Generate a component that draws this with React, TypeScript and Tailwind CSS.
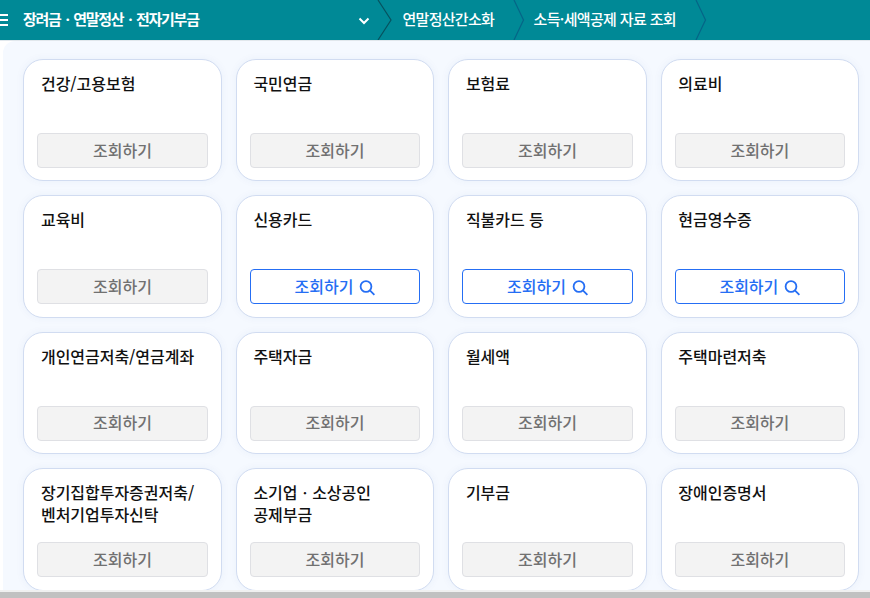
import React from "react";

const cards = [
  { lines: ["건강/고용보험"], active: false },
  { lines: ["국민연금"], active: false },
  { lines: ["보험료"], active: false },
  { lines: ["의료비"], active: false },
  { lines: ["교육비"], active: false },
  { lines: ["신용카드"], active: true },
  { lines: ["직불카드 등"], active: true },
  { lines: ["현금영수증"], active: true },
  { lines: ["개인연금저축/연금계좌"], active: false },
  { lines: ["주택자금"], active: false },
  { lines: ["월세액"], active: false },
  { lines: ["주택마련저축"], active: false },
  { lines: ["장기집합투자증권저축/", "벤처기업투자신탁"], active: false },
  { lines: ["소기업ㆍ소상공인", "공제부금"], active: false },
  { lines: ["기부금"], active: false },
  { lines: ["장애인증명서"], active: false },
];

const Divider = ({ wide = false }: { wide?: boolean }) => (
  <svg
    className={wide ? "w-[16px] h-[40px] shrink-0" : "w-[12px] h-[40px] shrink-0"}
    viewBox={wide ? "0 0 16 40" : "0 0 12 40"}
    fill="none"
  >
    <path
      d={wide ? "M1 0L14 20L1 40" : "M1 0L10.500 20L1 40"}
      stroke={wide ? "#06525f" : "#056587"}
      strokeWidth="1.2"
    />
  </svg>
);

const SearchIcon = () => (
  <svg className="w-[16px] h-[16px] ml-1.5 mt-[3px]" viewBox="0 0 16 16" fill="none" stroke="#256ef4" strokeWidth="1.8">
    <circle cx="7" cy="6.500" r="5.400" />
    <path d="M10.900 10.400L15.400 14.900" />
  </svg>
);

const TopBar = () => {
  return (
    <header className="flex items-center h-10 bg-[#008996] text-white shrink-0">
      <div className="flex flex-col gap-[3px] w-2">
        <span className="h-[2px] bg-white" />
        <span className="h-[2px] bg-white" />
        <span className="h-[2px] bg-white" />
      </div>
      <strong className="w-[335px] pl-[15px] pb-[2px] text-[15px] font-bold tracking-[-1.25px] whitespace-nowrap">
        장려금ㆍ연말정산ㆍ전자기부금
      </strong>
      <div className="w-[34px] pl-[15px]">
        <svg className="w-[12px] h-[8px] mt-0.5" viewBox="0 0 12 8" fill="none" stroke="#fff" strokeWidth="2">
          <path d="M1.500 1.500L6 6L10.500 1.500" />
        </svg>
      </div>
      <Divider wide />
      <span className="w-[120px] pl-[9.500px] pb-[2px] text-[15px] font-medium tracking-[-0.72px] whitespace-nowrap">
        연말정산간소화
      </span>
      <Divider />
      <span className="w-[170px] pl-[8.500px] pb-[2px] text-[15px] font-medium tracking-[-0.65px] whitespace-nowrap">
        소득·세액공제 자료 조회
      </span>
      <Divider />
    </header>
  );
};

const Card = ({ lines, active }: { lines: string[]; active: boolean }) => {
  return (
    <div className="flex flex-col justify-between h-[122.4px] rounded-[20px] border border-[#d1dcf1] bg-white px-[13px] pt-[12px] pb-[12.6px] shadow-[0_0_8px_rgba(40,80,160,0.05)]">
      <h2 className="pl-[3.700px] text-[16px] leading-[22px] font-medium tracking-[-0.03px] text-[#111] whitespace-nowrap">
        {lines.map((line) => (
          <span key={line} className="block">
            {line}
          </span>
        ))}
      </h2>
      <button
        className={
          active
            ? "flex items-center justify-center h-[35px] rounded-[4px] border border-[#256ef4] bg-white pb-px text-[16px] font-medium text-[#256ef4]"
            : "flex items-center justify-center h-[35px] rounded-[4px] border border-[#dfe0e4] bg-[#f3f3f3] pb-[1.500px] text-[16px] font-medium text-[#717171]"
        }
      >
        조회하기
        {active && <SearchIcon />}
      </button>
    </div>
  );
};

const App = () => {
  return (
    <div
      lang="ko"
      className="flex flex-col w-[870px] h-[598px] overflow-hidden bg-white font-['Noto_Sans_CJK_KR',sans-serif]"
    >
      <TopBar />
      <main className="flex-1 min-h-0 overflow-hidden border-t border-[#e1e7ec]">
        <div className="ml-[3px] h-full rounded-tl-[12px] bg-[#f5f9ff] pl-[20.300px] pt-[18px]">
          <div className="grid grid-cols-4 gap-[14px] w-[835.800px]">
            {cards.map((card) => (
              <Card key={card.lines[0]} lines={card.lines} active={card.active} />
            ))}
          </div>
        </div>
      </main>
      <footer className="h-2 shrink-0 border-t-2 border-[#f0f0f0] bg-[#c1c1c1]" />
    </div>
  );
};

export default App;
